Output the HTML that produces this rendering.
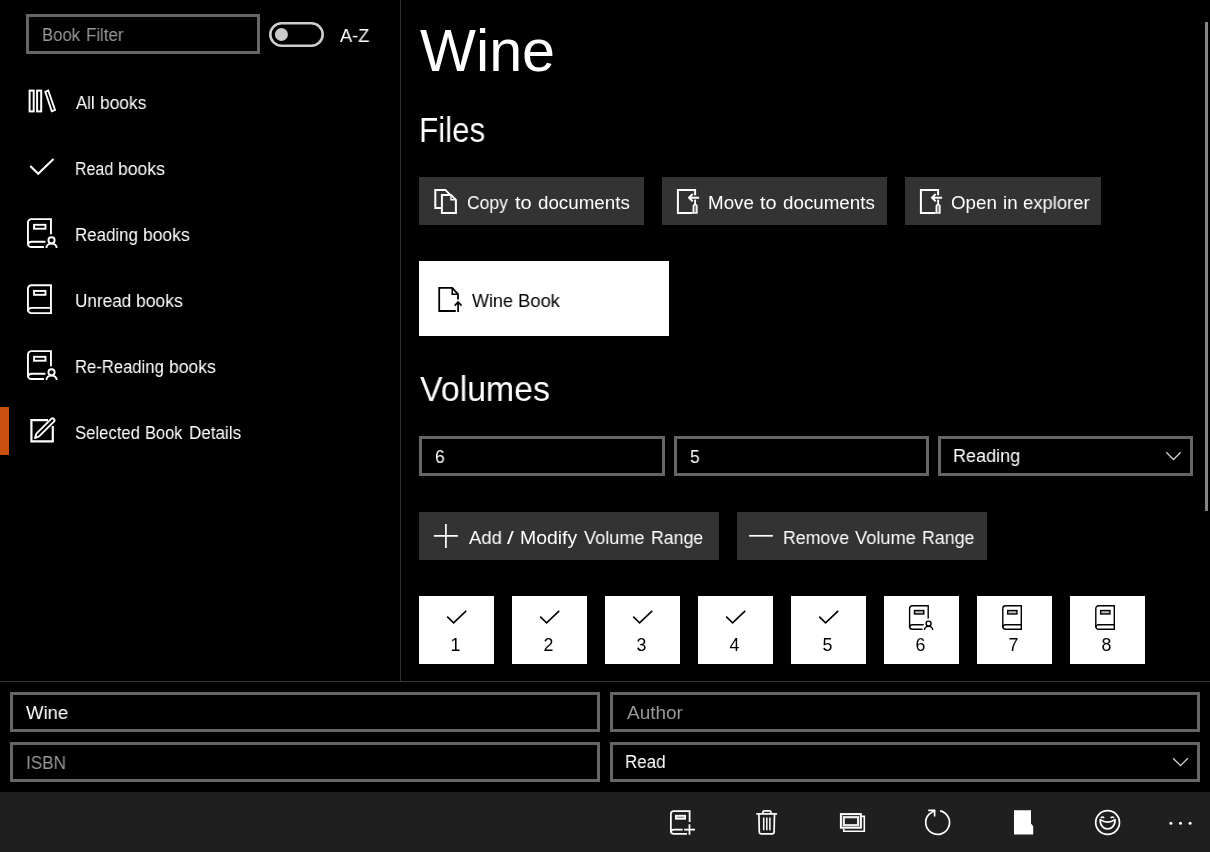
<!DOCTYPE html><html lang="en"><head><meta charset="utf-8"><title>Wine</title><style>
*{box-sizing:border-box;margin:0;padding:0}
html,body{width:1210px;height:852px;background:#000;overflow:hidden}
body{position:relative;font-family:"Liberation Sans",sans-serif;color:#fff}
.abs,.tx,.ic,.box,.btn,.tile,.vol{position:absolute}
.tx{white-space:nowrap;line-height:1;transform-origin:0 0;display:block;will-change:transform}
.ic{overflow:visible;display:block}
.box{border:3px solid #666;background:#000;height:40px}
.btn{background:#333;height:48px}
.tile,.vol{background:#fff}
#sidebar{left:0;top:0;width:401px;height:681px;border-right:1px solid #333}
#main{left:401px;top:0;width:809px;height:681px}
#editor{left:0;top:681px;width:1210px;height:111px;border-top:1px solid #333}
#cmdbar{left:0;top:792px;width:1210px;height:60px;background:#1f1f1f}
#selbar{left:0;top:407px;width:9px;height:48px;background:#ca5010}
#scroll{left:1205px;top:22px;width:2.5px;height:489px;background:#858585}
.vol .n{position:absolute;left:-0.6px;top:40.1px;width:75px;text-align:center;font-size:18.75px;line-height:1;color:#000;transform:scaleX(.95)}
</style></head><body>
<nav id="sidebar" class="abs">
<div class="box" style="left:26px;top:14px;width:234px"></div><span class="tx ph" style="left:41.96px;top:26.12px;font-size:18.75px;color:#999;transform:scaleX(0.8921)">Book</span> <span class="tx ph" style="left:86.45px;top:26.12px;font-size:18.75px;color:#999;transform:scaleX(0.8993)">Filter</span> 
<svg class="ic" style="left:266px;top:19px" width="62" height="31" viewBox="266 19 62 31" ><rect x="270.3" y="23.3" width="52.4" height="22.4" rx="11.2" fill="none" stroke="#cdcdcd" stroke-width="2.6"/><circle cx="281.4" cy="34.5" r="6.5" fill="#cbcbcb"/></svg>
<span class="tx " style="left:339.90px;top:27.12px;font-size:18.75px;color:#fff;transform:scaleX(0.9713)">A-Z</span>
<svg class="ic" style="left:26px;top:86px" width="34" height="30" viewBox="26 86 34 30" ><rect x="29.6" y="90.6" width="4.1" height="20.8" fill="none" stroke="#fff" stroke-width="2"/><rect x="37.1" y="90.6" width="4.1" height="20.8" fill="none" stroke="#fff" stroke-width="2"/><path d="M45.3,91.8 L48.3,90.5 L55,110 L51.8,111.2 Z" fill="none" stroke="#fff" stroke-width="1.85" /></svg>
<svg class="ic" style="left:26px;top:154px" width="34" height="26" viewBox="26 154 34 26" ><path d="M30.3,166.1 L38.2,173.7 L53.5,159.1" fill="none" stroke="#fff" stroke-width="2.1" /></svg>
<svg class="ic" style="left:24px;top:214px" width="38" height="38" viewBox="24 214 38 38" ><path d="M43.93,247.05 H31.44 A3.49,3.49 0 0 1 27.95,243.56 V222.64 A3.49,3.49 0 0 1 31.44,219.15 H50.95 V234.29" fill="none" stroke="#fff" stroke-width="1.9" /><path d="M45.43,241.74 H31.44 A3.49,3.49 0 0 0 27.95,245.23" fill="none" stroke="#fff" stroke-width="1.9" /><circle cx="51.53" cy="240.31" r="3.11" fill="none" stroke="#fff" stroke-width="1.9"/><path d="M46.42,248.00 A5.10,4.47 0 0 1 56.63,248.00" fill="none" stroke="#fff" stroke-width="1.9" /><rect x="34.05" y="224.81" width="11.42" height="3.91" fill="none" stroke="#fff" stroke-width="1.9"/></svg>
<svg class="ic" style="left:24px;top:280px" width="38" height="38" viewBox="24 280 38 38" ><path d="M50.95,313.15 H31.44 A3.49,3.49 0 0 1 27.95,309.66 V288.74 A3.49,3.49 0 0 1 31.44,285.25 H50.95 Z" fill="none" stroke="#fff" stroke-width="1.9" /><path d="M50.95,307.84 H31.44 A3.49,3.49 0 0 0 27.95,311.33" fill="none" stroke="#fff" stroke-width="1.9" /><rect x="34.05" y="290.91" width="11.42" height="3.91" fill="none" stroke="#fff" stroke-width="1.9"/></svg>
<svg class="ic" style="left:24px;top:346px" width="38" height="38" viewBox="24 346 38 38" ><path d="M43.93,379.05 H31.44 A3.49,3.49 0 0 1 27.95,375.56 V354.64 A3.49,3.49 0 0 1 31.44,351.15 H50.95 V366.29" fill="none" stroke="#fff" stroke-width="1.9" /><path d="M45.43,373.74 H31.44 A3.49,3.49 0 0 0 27.95,377.23" fill="none" stroke="#fff" stroke-width="1.9" /><circle cx="51.53" cy="372.31" r="3.11" fill="none" stroke="#fff" stroke-width="1.9"/><path d="M46.42,380.00 A5.10,4.47 0 0 1 56.63,380.00" fill="none" stroke="#fff" stroke-width="1.9" /><rect x="34.05" y="356.81" width="11.42" height="3.91" fill="none" stroke="#fff" stroke-width="1.9"/></svg>
<svg class="ic" style="left:26px;top:412px" width="36" height="36" viewBox="26 412 36 36" ><path d="M48,420.2 H31.4 V441.3 H52.8 V426" fill="none" stroke="#fff" stroke-width="2.2" /><path d="M35,438.1 L36.4,433.7 L51.2,418.9 A1.9,1.9 0 0 1 53.9,421.6 L39.1,436.4 Z" fill="#000" stroke="#fff" stroke-width="1.9" stroke-linejoin="round"/></svg>
<div id="selbar" class="abs"></div>
<span class="tx navt" style="left:75.60px;top:94.12px;font-size:18.75px;color:#fff;transform:scaleX(0.8896)">All</span> <span class="tx navt" style="left:100.09px;top:94.12px;font-size:18.75px;color:#fff;transform:scaleX(0.9261)">books</span> 
<span class="tx navt" style="left:74.92px;top:160.12px;font-size:18.75px;color:#fff;transform:scaleX(0.8508)">Read</span> <span class="tx navt" style="left:118.28px;top:160.12px;font-size:18.75px;color:#fff;transform:scaleX(0.9365)">books</span> 
<span class="tx navt" style="left:74.85px;top:226.12px;font-size:18.75px;color:#fff;transform:scaleX(0.9001)">Reading</span> <span class="tx navt" style="left:142.88px;top:226.12px;font-size:18.75px;color:#fff;transform:scaleX(0.9323)">books</span> 
<span class="tx navt" style="left:74.92px;top:292.12px;font-size:18.75px;color:#fff;transform:scaleX(0.9141)">Unread</span> <span class="tx navt" style="left:136.18px;top:292.12px;font-size:18.75px;color:#fff;transform:scaleX(0.9344)">books</span> 
<span class="tx navt" style="left:74.87px;top:358.12px;font-size:18.75px;color:#fff;transform:scaleX(0.8868)">Re-Reading</span> <span class="tx navt" style="left:168.78px;top:358.12px;font-size:18.75px;color:#fff;transform:scaleX(0.9344)">books</span> 
<span class="tx navt" style="left:74.59px;top:424.12px;font-size:18.75px;color:#fff;transform:scaleX(0.8911)">Selected</span> <span class="tx navt" style="left:145.09px;top:424.12px;font-size:18.75px;color:#fff;transform:scaleX(0.8752)">Book</span> <span class="tx navt" style="left:188.94px;top:424.12px;font-size:18.75px;color:#fff;transform:scaleX(0.9086)">Details</span> 
</nav>
<main id="main" class="abs" style="left:0;width:1210px">
<h1 class="tx title" style="font-weight:400;left:420.40px;top:21.70px;font-size:58.6px;color:#fff;transform:scaleX(1.0119)">Wine</h1>
<h2 class="tx h2" style="font-weight:400;left:419.35px;top:112.27px;font-size:35px;color:#fff;transform:scaleX(0.8948)">Files</h2>
<div class="btn" style="left:419px;top:177px;width:225px"></div>
<div class="btn" style="left:662px;top:177px;width:225px"></div>
<div class="btn" style="left:905px;top:177px;width:196px"></div>
<svg class="ic" style="left:432px;top:186px" width="28" height="30" viewBox="432 186 28 30" ><path d="M441,208.1 H435.3 V189.9 H445.3 L449.6,194.1" fill="none" stroke="#fff" stroke-width="2" /><path d="M441.9,194.9 H451 L455.9,199.8 V212.9 H441.9 Z" fill="none" stroke="#fff" stroke-width="2" /><path d="M451,194.9 V199.8 H455.9" fill="none" stroke="#fff" stroke-width="1.4" /></svg>
<svg class="ic" style="left:674px;top:186px" width="28" height="30" viewBox="674 186 28 30" ><path d="M695.1,195.3 V189.9 H677.9 V212.9 H692.6" fill="none" stroke="#fff" stroke-width="2" /><path d="M699.1,197.7 H689.3 M692.7,194 L689,197.7 L692.7,201.4" fill="none" stroke="#fff" stroke-width="1.9" /><path d="M695.1,199.6 V204.6" fill="none" stroke="#fff" stroke-width="1.9" /><path d="M693.3,213 V206.4 A1.8,1.8 0 0 1 696.9,206.4 V213 Z" fill="#8a8a8a" stroke="#fff" stroke-width="1.5" /></svg>
<svg class="ic" style="left:917px;top:186px" width="28" height="30" viewBox="917 186 28 30" ><path d="M938.1,195.3 V189.9 H920.9 V212.9 H935.6" fill="none" stroke="#fff" stroke-width="2" /><path d="M942.1,197.7 H932.3 M935.7,194 L932,197.7 L935.7,201.4" fill="none" stroke="#fff" stroke-width="1.9" /><path d="M938.1,199.6 V204.6" fill="none" stroke="#fff" stroke-width="1.9" /><path d="M936.3,213 V206.4 A1.8,1.8 0 0 1 939.9,206.4 V213 Z" fill="#8a8a8a" stroke="#fff" stroke-width="1.5" /></svg>
<span class="tx " style="left:467.46px;top:194.12px;font-size:18.75px;color:#fff;transform:scaleX(0.9325)">Copy</span> <span class="tx " style="left:515.29px;top:194.12px;font-size:18.75px;color:#fff;transform:scaleX(1.0673)">to</span> <span class="tx " style="left:537.60px;top:194.12px;font-size:18.75px;color:#fff;transform:scaleX(1.0006)">documents</span> <span class="tx " style="left:708.30px;top:194.12px;font-size:18.75px;color:#fff;transform:scaleX(1.0018)">Move</span> <span class="tx " style="left:760.29px;top:194.12px;font-size:18.75px;color:#fff;transform:scaleX(1.0605)">to</span> <span class="tx " style="left:782.50px;top:194.12px;font-size:18.75px;color:#fff;transform:scaleX(1.0017)">documents</span> <span class="tx " style="left:951.41px;top:194.12px;font-size:18.75px;color:#fff;transform:scaleX(0.9900)">Open</span> <span class="tx " style="left:1002.53px;top:194.12px;font-size:18.75px;color:#fff;transform:scaleX(0.9783)">in</span> <span class="tx " style="left:1022.71px;top:194.12px;font-size:18.75px;color:#fff;transform:scaleX(0.9836)">explorer</span> 
<div class="tile" style="left:419px;top:261px;width:250px;height:75px"></div>
<svg class="ic" style="left:436px;top:284px" width="28" height="30" viewBox="436 284 28 30" ><path d="M455.8,311 H439.2 V287.8 H452.2 L458,294.2 V299.6" fill="none" stroke="#000" stroke-width="1.8" /><path d="M452.2,287.8 V294.2 H458" fill="none" stroke="#000" stroke-width="1.5" /><path d="M458.1,312 V302 M454.7,305.6 L458.1,302 L461.5,305.6" fill="none" stroke="#000" stroke-width="1.7" /></svg>
<span class="tx " style="left:471.80px;top:292.12px;font-size:18.75px;color:#000;transform:scaleX(0.9596)">Wine</span> <span class="tx " style="left:518.33px;top:292.12px;font-size:18.75px;color:#000;transform:scaleX(0.9816)">Book</span> 
<h2 class="tx h2" style="font-weight:400;left:420.20px;top:371.37px;font-size:35px;color:#fff;transform:scaleX(0.9681)">Volumes</h2>
<div class="box" style="left:419px;top:436px;width:246px"></div>
<div class="box" style="left:674px;top:436px;width:255px"></div>
<div class="box" style="left:938px;top:436px;width:255px"></div>
<span class="tx " style="left:434.66px;top:448.12px;font-size:18.75px;color:#fff;transform:scaleX(0.9300)">6</span><span class="tx " style="left:690.05px;top:448.12px;font-size:18.75px;color:#fff;transform:scaleX(0.9300)">5</span><span class="tx " style="left:952.96px;top:447.12px;font-size:18.75px;color:#fff;transform:scaleX(0.9611)">Reading</span>
<svg class="ic" style="left:1164px;top:449px" width="20" height="14" viewBox="1164 449 20 14" ><path d="M1166.3,452.3 L1173.5,459.5 L1180.7,452.3" fill="none" stroke="#d4d4d4" stroke-width="1.25" /></svg>
<div class="btn" style="left:419px;top:512px;width:300px"></div>
<div class="btn" style="left:737px;top:512px;width:250px"></div>
<svg class="ic" style="left:432px;top:522px" width="28" height="28" viewBox="432 522 28 28" ><path d="M433.9,535.8 H457.9 M445.9,523.9 V547.9" fill="none" stroke="#fff" stroke-width="1.7" /></svg>
<svg class="ic" style="left:747px;top:530px" width="28" height="12" viewBox="747 530 28 12" ><path d="M749.1,535.8 H772.9" fill="none" stroke="#fff" stroke-width="1.7" /></svg>
<span class="tx " style="left:469.10px;top:529.12px;font-size:18.75px;color:#fff;transform:scaleX(0.9834)">Add</span> <span class="tx " style="left:507.35px;top:529.12px;font-size:18.75px;color:#fff;transform:scaleX(1.3000)">/</span> <span class="tx " style="left:519.95px;top:529.12px;font-size:18.75px;color:#fff;transform:scaleX(1.0344)">Modify</span> <span class="tx " style="left:584.10px;top:529.12px;font-size:18.75px;color:#fff;transform:scaleX(0.9690)">Volume</span> <span class="tx " style="left:650.98px;top:529.12px;font-size:18.75px;color:#fff;transform:scaleX(0.9447)">Range</span> <span class="tx " style="left:783.08px;top:529.12px;font-size:18.75px;color:#fff;transform:scaleX(0.9453)">Remove</span> <span class="tx " style="left:855.30px;top:529.12px;font-size:18.75px;color:#fff;transform:scaleX(0.9739)">Volume</span> <span class="tx " style="left:922.08px;top:529.12px;font-size:18.75px;color:#fff;transform:scaleX(0.9485)">Range</span> 
<div class="vol" style="left:419px;top:596px;width:75px;height:68px"><span class="n">1</span></div><svg class="ic" style="left:444px;top:608px" width="26" height="20" viewBox="444 608 26 20" ><path d="M447.20,616.6 L453.60,622.9 L466.20,610.9" fill="none" stroke="#000" stroke-width="1.6" /></svg>
<div class="vol" style="left:512px;top:596px;width:75px;height:68px"><span class="n">2</span></div><svg class="ic" style="left:537px;top:608px" width="26" height="20" viewBox="537 608 26 20" ><path d="M540.20,616.6 L546.60,622.9 L559.20,610.9" fill="none" stroke="#000" stroke-width="1.6" /></svg>
<div class="vol" style="left:605px;top:596px;width:75px;height:68px"><span class="n">3</span></div><svg class="ic" style="left:630px;top:608px" width="26" height="20" viewBox="630 608 26 20" ><path d="M633.20,616.6 L639.60,622.9 L652.20,610.9" fill="none" stroke="#000" stroke-width="1.6" /></svg>
<div class="vol" style="left:698px;top:596px;width:75px;height:68px"><span class="n">4</span></div><svg class="ic" style="left:723px;top:608px" width="26" height="20" viewBox="723 608 26 20" ><path d="M726.20,616.6 L732.60,622.9 L745.20,610.9" fill="none" stroke="#000" stroke-width="1.6" /></svg>
<div class="vol" style="left:791px;top:596px;width:75px;height:68px"><span class="n">5</span></div><svg class="ic" style="left:816px;top:608px" width="26" height="20" viewBox="816 608 26 20" ><path d="M819.20,616.6 L825.60,622.9 L838.20,610.9" fill="none" stroke="#000" stroke-width="1.6" /></svg>
<div class="vol" style="left:884px;top:596px;width:75px;height:68px"><span class="n">6</span></div><svg class="ic" style="left:906px;top:603px" width="32" height="30" viewBox="906 603 32 30" ><path d="M922.50,629.30 H912.40 A2.80,2.80 0 0 1 909.60,626.50 V608.60 A2.80,2.80 0 0 1 912.40,605.80 H928.20 V618.55" fill="none" stroke="#000" stroke-width="1.4" /><path d="M923.70,624.77 H912.40 A2.80,2.80 0 0 0 909.60,627.57" fill="none" stroke="#000" stroke-width="1.4" /><circle cx="928.60" cy="623.58" r="2.50" fill="none" stroke="#000" stroke-width="1.4"/><path d="M924.50,630.00 A4.10,3.73 0 0 1 932.70,630.00" fill="none" stroke="#000" stroke-width="1.4" /><rect x="914.50" y="610.53" width="9.30" height="3.46" fill="#bbb" stroke="#000" stroke-width="1.4"/></svg>
<div class="vol" style="left:977px;top:596px;width:75px;height:68px"><span class="n">7</span></div><svg class="ic" style="left:999px;top:603px" width="32" height="30" viewBox="999 603 32 30" ><path d="M1021.30,629.30 H1005.59 A2.79,2.79 0 0 1 1002.80,626.51 V608.59 A2.79,2.79 0 0 1 1005.59,605.80 H1021.30 Z" fill="none" stroke="#000" stroke-width="1.4" /><path d="M1021.30,624.77 H1005.59 A2.79,2.79 0 0 0 1002.80,627.56" fill="none" stroke="#000" stroke-width="1.4" /><rect x="1007.68" y="610.53" width="9.25" height="3.46" fill="#bbb" stroke="#000" stroke-width="1.4"/></svg>
<div class="vol" style="left:1070px;top:596px;width:75px;height:68px"><span class="n">8</span></div><svg class="ic" style="left:1092px;top:603px" width="32" height="30" viewBox="1092 603 32 30" ><path d="M1114.30,629.30 H1098.59 A2.79,2.79 0 0 1 1095.80,626.51 V608.59 A2.79,2.79 0 0 1 1098.59,605.80 H1114.30 Z" fill="none" stroke="#000" stroke-width="1.4" /><path d="M1114.30,624.77 H1098.59 A2.79,2.79 0 0 0 1095.80,627.56" fill="none" stroke="#000" stroke-width="1.4" /><rect x="1100.68" y="610.53" width="9.25" height="3.46" fill="#bbb" stroke="#000" stroke-width="1.4"/></svg>
<div id="scroll" class="abs"></div>
</main>
<section id="editor" class="abs"></section>
<div class="box" style="left:10px;top:692px;width:590px"></div>
<div class="box" style="left:610px;top:692px;width:590px"></div>
<div class="box" style="left:10px;top:742px;width:590px"></div>
<div class="box" style="left:610px;top:742px;width:590px"></div>
<span class="tx " style="left:26.20px;top:704.12px;font-size:18.75px;color:#fff;transform:scaleX(0.9883)">Wine</span><span class="tx ph" style="left:626.80px;top:704.12px;font-size:18.75px;color:#999;transform:scaleX(1.0127)">Author</span><span class="tx ph" style="left:26.15px;top:754.12px;font-size:18.75px;color:#999;transform:scaleX(0.9133)">ISBN</span><span class="tx " style="left:625.25px;top:753.12px;font-size:18.75px;color:#fff;transform:scaleX(0.9029)">Read</span>
<svg class="ic" style="left:1170px;top:755px" width="22" height="14" viewBox="1170 755 22 14" ><path d="M1173.1,758.3 L1180.5,765.6 L1187.9,758.3" fill="none" stroke="#d4d4d4" stroke-width="1.25" /></svg>
<footer id="cmdbar" class="abs"></footer>
<svg class="ic" style="left:667px;top:807px" width="32" height="32" viewBox="667 807 32 32" ><path d="M687.01,833.83 H673.75 A2.87,2.87 0 0 1 670.88,830.96 V813.95 A2.87,2.87 0 0 1 673.75,811.08 H689.62 V821.96" fill="none" stroke="#fff" stroke-width="1.75" /><path d="M682.71,829.56 H673.75 A2.87,2.87 0 0 0 670.88,832.43" fill="none" stroke="#fff" stroke-width="1.75" /><path d="M684.14,829.56 H695.01 M689.48,824.29 V834.70" fill="none" stroke="#fff" stroke-width="1.75" /><rect x="675.90" y="815.73" width="9.22" height="3.03" fill="#8a8a8a" stroke="#fff" stroke-width="1.75"/></svg>
<svg class="ic" style="left:754px;top:808px" width="26" height="30" viewBox="754 808 26 30" ><path d="M756.3,813.9 H777.1" fill="none" stroke="#fff" stroke-width="1.7" /><path d="M762.8,813.9 V812.5 A1.6,1.6 0 0 1 764.4,810.9 H769.4 A1.6,1.6 0 0 1 771,812.5 V813.9" fill="none" stroke="#fff" stroke-width="1.7" /><path d="M758.9,813.9 L759.3,832 A2,2 0 0 0 761.3,833.9 H772.1 A2,2 0 0 0 774.1,832 L774.5,813.9" fill="none" stroke="#fff" stroke-width="1.7" /><path d="M763.7,817.4 V830.3 M766.8,817.4 V830.3 M769.9,817.4 V830.3" fill="none" stroke="#fff" stroke-width="1.5" /></svg>
<svg class="ic" style="left:838px;top:811px" width="30" height="24" viewBox="838 811 30 24" ><rect x="840.9" y="814.1" width="20" height="13.6" fill="none" stroke="#fff" stroke-width="2"/><rect x="843.8" y="817.2" width="14.3" height="8" fill="#1f1f1f" stroke="#ececec" stroke-width="2.2"/><path d="M862,816.4 H864.3 V831.2 H843.7 V828.8" fill="none" stroke="#fff" stroke-width="1.6" /></svg>
<svg class="ic" style="left:922px;top:807px" width="32" height="32" viewBox="922 807 32 32" ><path d="M940.07,810.86 A11.9,11.9 0 1 1 928.90,814.38 L934.4,810.6" fill="none" stroke="#fff" stroke-width="1.7" /><path d="M928.2,810.4 H934.6 V816.6" fill="none" stroke="#fff" stroke-width="1.7" /></svg>
<svg class="ic" style="left:1012px;top:808px" width="24" height="30" viewBox="1012 808 24 30" ><path d="M1014,810.3 H1031 V823.6 L1033.2,826.2 V834.6 H1014 Z" fill="#fff" stroke="none" stroke-width="0" /></svg>
<svg class="ic" style="left:1093px;top:808px" width="30" height="30" viewBox="1093 808 30 30" ><circle cx="1107.6" cy="822.5" r="11.9" fill="none" stroke="#fff" stroke-width="1.7"/><path d="M1100.2,819.6 Q1107.6,824.6 1115,819.6 C1115.6,832 1099.6,832 1100.2,819.6 Z" fill="none" stroke="#fff" stroke-width="1.7" stroke-linejoin="round"/><path d="M1100.8,818 Q1102.5,816 1104.2,818 M1110.6,818 Q1112.3,816 1114,818" fill="none" stroke="#fff" stroke-width="1.4" /></svg>
<svg class="ic" style="left:1166px;top:818px" width="30" height="10" viewBox="1166 818 30 10" ><circle cx="1170.9" cy="823.3" r="1.5" fill="#fff"/><circle cx="1180.5" cy="823.3" r="1.5" fill="#fff"/><circle cx="1190.1" cy="823.3" r="1.5" fill="#fff"/></svg>
</body></html>
